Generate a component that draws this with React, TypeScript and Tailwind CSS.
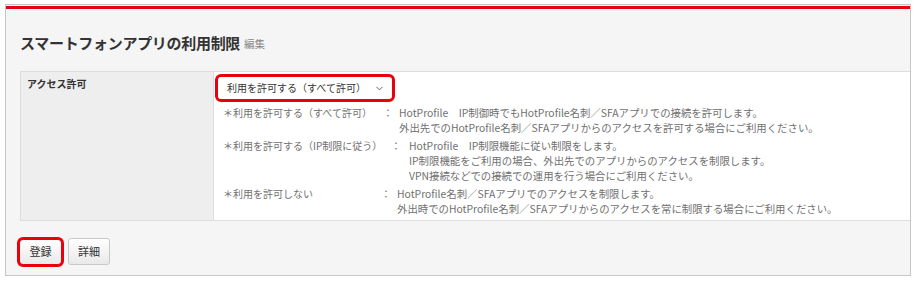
import { ChevronDown } from "lucide-react";

type Entry = {
  label: string;
  labelWidth: string;
  colonWidth: string;
  lines: string[];
};

const entries: Entry[] = [
  {
    label: "＊利用を許可する（すべて許可）",
    labelWidth: "w-[160px]",
    colonWidth: "w-[16px]",
    lines: [
      "HotProfile　IP制御時でもHotProfile名刺／SFAアプリでの接続を許可します。",
      "外出先でのHotProfile名刺／SFAアプリからのアクセスを許可する場合にご利用ください。",
    ],
  },
  {
    label: "＊利用を許可する（IP制限に従う）",
    labelWidth: "w-[168px]",
    colonWidth: "w-[18px]",
    lines: [
      "HotProfile　IP制限機能に従い制限をします。",
      "IP制限機能をご利用の場合、外出先でのアプリからのアクセスを制限します。",
      "VPN接続などでの接続での運用を行う場合にご利用ください。",
    ],
  },
  {
    label: "＊利用を許可しない",
    labelWidth: "w-[158px]",
    colonWidth: "w-[16px]",
    lines: [
      "HotProfile名刺／SFAアプリでのアクセスを制限します。",
      "外出時でのHotProfile名刺／SFAアプリからのアクセスを常に制限する場合にご利用ください。",
    ],
  },
];

const font = { fontFamily: '"Noto Sans CJK JP", "Noto Sans", sans-serif' };

export default function App() {
  return (
    <div className="w-[916px] h-[282px] bg-white pt-[4px] pl-[5px]" style={font}>
      <div className="w-[906px] h-[272px] border border-[#c6c6c6] bg-[#f5f5f5] overflow-hidden">
        <div className="mt-[1px] h-[3px] bg-[#e60012]" />

        <div className="flex items-end gap-[4px] pl-[14px] pt-[24px] mb-[18px] h-[44px]">
          <h1 className="text-[15px] leading-[20px] font-bold text-[#333] tracking-[-0.3px]">
            スマートフォンアプリの利用制限
          </h1>
          <span className="text-[10.5px] leading-[18px] text-[#888]">編集</span>
        </div>

        <div className="ml-[14px] w-[900px] flex border-t border-b border-l border-[#dddddd] bg-white">
          <div className="w-[193px] shrink-0 bg-[#eeeeee] border-r border-[#dddddd] pl-[6px] pt-[5px]">
            <div className="text-[10px] leading-[14px] font-bold text-[#333]">アクセス許可</div>
          </div>
          <div className="flex-1 pl-[1px] pt-[2px] pb-[4px]">
            <div className="w-[180px] h-[28px] border-[3px] border-[#e8000b] rounded-[6px] bg-white flex items-center justify-between pl-[9px] pr-[7px]">
              <span className="text-[10px] text-[#333] leading-[14px]">利用を許可する（すべて許可）</span>
              <ChevronDown size={11} strokeWidth={2} className="text-[#555]" />
            </div>
            <div className="pl-[8px] pt-[3px] flex flex-col gap-[3px] text-[10px] leading-[15px] text-[#707070]">
              {entries.map((e) => (
                <div key={e.label} className="flex">
                  <span className={`${e.labelWidth} shrink-0 whitespace-nowrap`}>{e.label}</span>
                  <span className={`${e.colonWidth} shrink-0`}>：</span>
                  <div className="flex flex-col whitespace-nowrap text-[10.4px]">
                    {e.lines.map((l) => (
                      <span key={l}>{l}</span>
                    ))}
                  </div>
                </div>
              ))}
            </div>
          </div>
        </div>

        <div className="flex items-center gap-[6px] pl-[13px] pt-[17px]">
          <button className="w-[43px] h-[26px] rounded-[4px] border border-[#c4c4c4] bg-gradient-to-b from-white to-[#e9e9e9] text-[11px] text-[#333] outline-[3px] outline-solid outline-[#e8000b] -outline-offset-1">
            登録
          </button>
          <button className="w-[42px] h-[27px] rounded-[3px] border border-[#c8c8c8] bg-gradient-to-b from-white to-[#e9e9e9] text-[11px] text-[#333]">
            詳細
          </button>
        </div>
      </div>
    </div>
  );
}
